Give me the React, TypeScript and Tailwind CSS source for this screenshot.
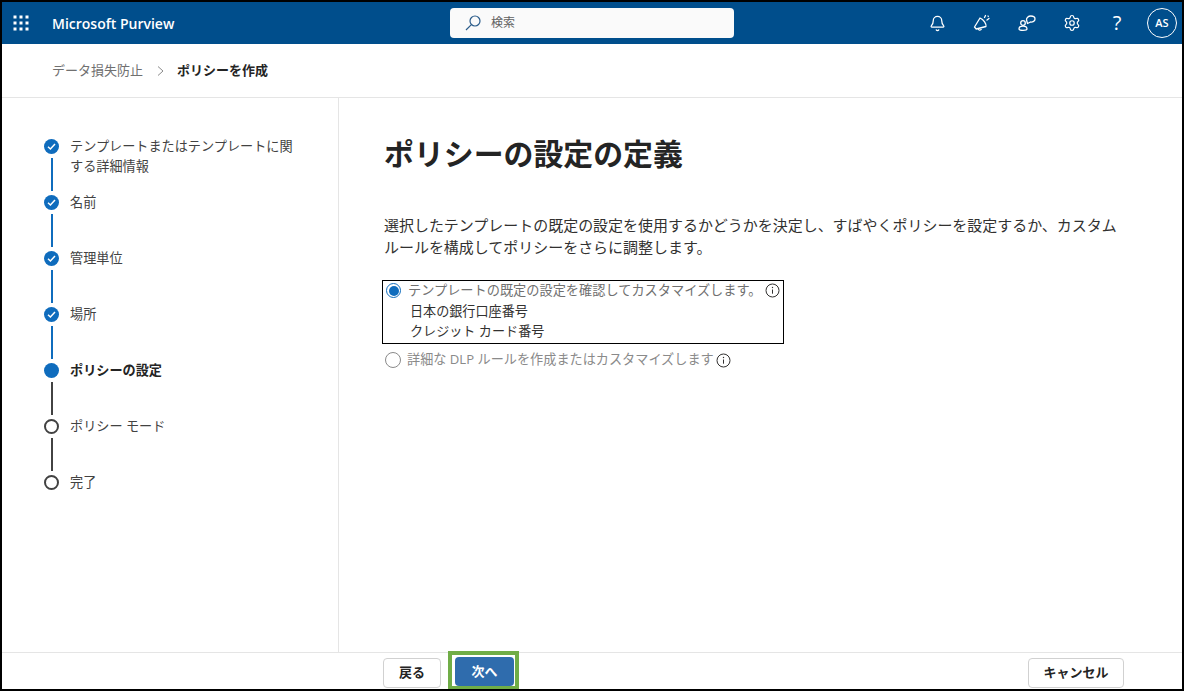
import { Bell, Settings } from "lucide-react";

const steps = [
  { label: "テンプレートまたはテンプレートに関する詳細情報", state: "done" },
  { label: "名前", state: "done" },
  { label: "管理単位", state: "done" },
  { label: "場所", state: "done" },
  { label: "ポリシーの設定", state: "current" },
  { label: "ポリシー モード", state: "todo" },
  { label: "完了", state: "todo" },
];

const GridIcon = () => (
  <svg width="16" height="16" viewBox="0 0 16 16" fill="white">
    {[0.5, 6.5, 12.5].map((y) =>
      [0.5, 6.5, 12.5].map((x) => <rect key={`${x}-${y}`} x={x} y={y} width="3" height="3" />)
    )}
  </svg>
);

const SearchIcon = () => (
  <svg width="18" height="18" viewBox="0 0 18 18" fill="none" stroke="#2b5c8a" strokeWidth="1.2">
    <circle cx="11" cy="7" r="5" />
    <path d="M7.4 10.6 2 16" />
  </svg>
);

const MegaphoneIcon = () => (
  <svg width="18" height="18" viewBox="0 0 18 18" fill="none" stroke="white" strokeWidth="1.3" strokeLinejoin="round">
    <path d="M7 4 1.500 13l1.700 2 9.800-2.500c.5-2.600-2.300-7-6-8.500Z" />
    <path d="M5 14.500c.3 1.800 2.600 2.200 3.500.5" />
    <path d="M11.500 3.500 12.500 1.500M14 6l2-1.500M15 2l.3.500" strokeLinecap="round" />
  </svg>
);

const ChatPeopleIcon = () => (
  <svg width="18" height="18" viewBox="0 0 18 18" fill="none" stroke="white" strokeWidth="1.3" strokeLinejoin="round">
    <circle cx="5" cy="9" r="2.300" />
    <path d="M1 15c0-2 1.800-2.800 4-2.800s4 .8 4 2.800c0 1.800-8 1.800-8 0Z" />
    <path d="M8.500 6c-.2-2.200 1.800-4 4.300-4 2.300 0 4.200 1.200 4.200 3 0 2-2.200 3.300-4.500 3L9.500 9.500Z" />
  </svg>
);

const InfoIcon = () => (
  <svg width="15" height="15" viewBox="0 0 15 15" fill="none" stroke="#323130" strokeWidth="1">
    <circle cx="7.500" cy="7.500" r="6.500" />
    <path d="M7.500 6.500v4.200" />
    <circle cx="7.500" cy="4.500" r="0.700" fill="#323130" stroke="none" />
  </svg>
);

const StepDot = ({ state }: { state: string }) => {
  if (state === "done") {
    return (
      <div className="flex h-[15px] w-[15px] shrink-0 items-center justify-center rounded-full bg-[#0f6cbd]">
        <svg width="9" height="9" viewBox="0 0 9 9" fill="none" stroke="white" strokeWidth="1.5">
          <path d="M1 4.800 3.400 7 8 2" />
        </svg>
      </div>
    );
  }
  if (state === "current") {
    return <div className="h-[15px] w-[15px] shrink-0 rounded-full bg-[#0f6cbd]" />;
  }
  return <div className="h-[15px] w-[15px] shrink-0 rounded-full border-2 border-[#424242] bg-white" />;
};

export default function App() {
  return (
    <div className="flex h-[691px] w-[1184px] flex-col overflow-hidden border-2 border-black bg-white font-['Open_Sans','Noto_Sans_CJK_JP',sans-serif] text-[#323130]">
      <header className="flex h-[42px] shrink-0 items-center bg-[#004e8c] text-white">
        <div className="ml-[11px]">
          <GridIcon />
        </div>
        <div className="ml-[23px] w-[398px] text-[14px] font-semibold">Microsoft Purview</div>
        <div className="flex h-[30px] w-[284px] items-center rounded bg-[#fafafa] pl-[14px]">
          <SearchIcon />
          <span className="ml-[9px] text-[12px] text-[#616161]">検索</span>
        </div>
        <div className="ml-auto flex items-center">
          <div className="mr-[21px] flex items-center gap-[27px]">
            <div className="flex w-[18px] justify-center">
              <Bell size={17} strokeWidth={1.800} />
            </div>
            <MegaphoneIcon />
            <ChatPeopleIcon />
            <div className="flex w-[18px] justify-center">
              <Settings size={18} strokeWidth={1.600} />
            </div>
            <span className="w-[18px] text-center text-[20px] leading-none">?</span>
          </div>
          <div className="mr-[5px] flex h-[30px] w-[30px] items-center justify-center rounded-full border border-white text-[11px] font-semibold">
            AS
          </div>
        </div>
      </header>

      <nav className="flex h-[54px] shrink-0 items-center border-b border-[#e5e5e5] pl-[50px] text-[13px]">
        <span className="text-[#707070]">データ損失防止</span>
        <svg className="ml-[14px] mr-[13px]" width="7" height="10" viewBox="0 0 7 10" fill="none" stroke="#8a8a8a" strokeWidth="1">
          <path d="M1 .500 6 5 1 9.500" />
        </svg>
        <span className="font-bold text-[#242424]">ポリシーを作成</span>
      </nav>

      <div className="flex min-h-0 flex-1">
        <aside className="w-[337px] shrink-0 border-r border-[#e5e5e5] pl-[42px] pt-[41px]">
          {steps.map((step, i) => {
            const isLast = i === steps.length - 1;
            return (
              <div key={step.label} className="flex h-[56px] gap-[11px]">
                <div className="flex w-[15px] shrink-0 flex-col items-center">
                  <StepDot state={step.state} />
                  {!isLast && (
                    <div
                      className={`mt-[4px] h-[33px] w-[2px] ${
                        step.state === "done" ? "bg-[#0f6cbd]" : "bg-[#424242]"
                      }`}
                    />
                  )}
                </div>
                <div
                  className={`-mt-[3px] w-[226px] text-[13.15px] leading-[20px] ${
                    step.state === "current" ? "font-bold text-[#242424]" : "text-[#424242]"
                  }`}
                >
                  {step.label}
                </div>
              </div>
            );
          })}
        </aside>

        <main className="min-w-0 flex-1 pl-[45px] pt-[34px]">
          <h1 className="text-[29.9px] font-bold leading-[44px] text-[#242424]">ポリシーの設定の定義</h1>
          <p className="mt-[38px] w-[738px] text-[14.98px] leading-[22px] text-[#323130]">
            選択したテンプレートの既定の設定を使用するかどうかを決定し、すばやくポリシーを設定するか、カスタムルールを構成してポリシーをさらに調整します。
          </p>

          <div className="-ml-[2px] mt-[22px] h-[64px] w-[402px] border border-black pl-[3px]">
            <div className="flex h-[19px] items-center">
              <div className="flex h-[15px] w-[15px] items-center justify-center rounded-full border border-[#0f6cbd]">
                <div className="h-[10px] w-[10px] rounded-full bg-[#0f6cbd]" />
              </div>
              <span className="ml-[7px] text-[13.2px] text-[#707070]">
                テンプレートの既定の設定を確認してカスタマイズします。
              </span>
              <span className="ml-[3px]">
                <InfoIcon />
              </span>
            </div>
            <div className="ml-[24px] mt-[1px] text-[13.1px] leading-[20px] text-[#323130]">
              <div>日本の銀行口座番号</div>
              <div>クレジット カード番号</div>
            </div>
          </div>

          <div className="mt-[5px] flex h-[22px] items-center pl-[1px]">
            <div className="h-[16px] w-[16px] rounded-full border border-[#8a8a8a]" />
            <span className="ml-[6px] text-[13.15px] text-[#8a8a8a]">
              詳細な DLP ルールを作成またはカスタマイズします
            </span>
            <span className="ml-[2px]">
              <InfoIcon />
            </span>
          </div>
        </main>
      </div>

      <footer className="flex h-[37px] shrink-0 items-center border-t border-[#e5e5e5] pl-[381px]">
        <button className="mt-[4px] h-[30px] w-[58px] rounded border border-[#d1d1d1] bg-white text-[13px] font-semibold text-[#242424]">
          戻る
        </button>
        <div className="relative z-10 ml-[7px] -mt-[1px] h-[39px] w-[71px] border-[4px] border-[#70ad47] px-[3px] py-[2px]">
          <button className="h-[29px] w-[59px] rounded bg-[#2f6cad] text-[13px] font-semibold text-white">次へ</button>
        </div>
        <button className="ml-auto mr-[58px] mt-[4px] h-[30px] w-[96px] rounded border border-[#d1d1d1] bg-white text-[13px] font-semibold text-[#242424]">
          キャンセル
        </button>
      </footer>
    </div>
  );
}
